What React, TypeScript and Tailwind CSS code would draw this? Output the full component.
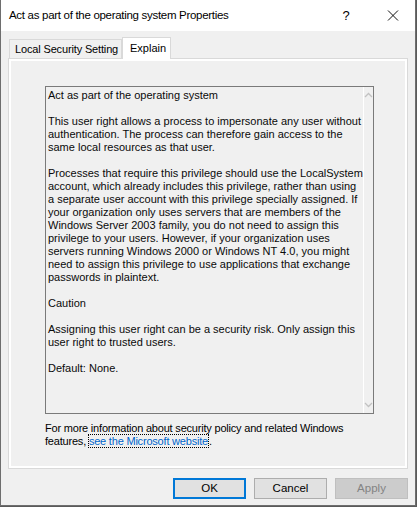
const EXPLAIN_LINES = [
  "Act as part of the operating system",
  "",
  "This user right allows a process to impersonate any user without",
  "authentication. The process can therefore gain access to the",
  "same local resources as that user.",
  "",
  "Processes that require this privilege should use the LocalSystem",
  "account, which already includes this privilege, rather than using",
  "a separate user account with this privilege specially assigned. If",
  "your organization only uses servers that are members of the",
  "Windows Server 2003 family, you do not need to assign this",
  "privilege to your users. However, if your organization uses",
  "servers running Windows 2000 or Windows NT 4.0, you might",
  "need to assign this privilege to use applications that exchange",
  "passwords in plaintext.",
  "",
  "Caution",
  "",
  "Assigning this user right can be a security risk. Only assign this",
  "user right to trusted users.",
  "",
  "Default: None.",
];

const ui = "font-['Segoe_UI','Liberation_Sans',Arial,sans-serif]";

export default function App() {
  return (
    <div className="w-[417px] h-[507px] bg-[#5a5a5a] overflow-hidden">
      <div className={`w-[416px] h-[506px] flex flex-col border-x border-b border-[#6e6e6e] bg-[#f0f0f0] text-black ${ui}`}>
        {/* title bar */}
        <div className="h-[31px] shrink-0 bg-white flex items-center pl-[8px] text-[11.5px] tracking-[-0.3px]">
          <span className="flex-1">Act as part of the operating system Properties</span>
          <span className="w-[46px] text-center text-[13px] mr-[1px]">?</span>
          <svg width="46" height="31" viewBox="0 0 46 31" className="mr-[-1px]">
            <path d="M18 10.5 L28 20.5 M28 10.5 L18 20.5" stroke="#111" strokeWidth="1" fill="none" />
          </svg>
        </div>

        <div className="flex-1 flex flex-col px-[7px]">
          {/* tabs */}
          <div className="mt-[6px] flex items-end h-[21px] pl-[1px] text-[11px] whitespace-nowrap">
            <div className="h-[19px] w-[113px] pl-[5px] flex items-center border border-b-0 border-[#d9d9d9] bg-[#f0f0f0] tracking-[-0.15px]">
              Local Security Setting
            </div>
            <div className="relative h-[22px] w-[49px] -mb-[1px] pl-[7px] flex items-center border border-b-0 border-[#d9d9d9] bg-white z-10">
              Explain
            </div>
          </div>

          {/* tab page */}
          <div className="h-[411px] border border-[#d9d9d9]">
            <div className="h-full border-2 border-white flex flex-col px-[34px] pt-[25px]">
              <div className="w-[329px] h-[328px] border border-[#7a7a7a] bg-[#f0f0f0] flex">
                <div className="flex-1 pl-[2px] pt-[2px] font-['Liberation_Sans',Arial,sans-serif] text-[11px] leading-[13px] text-[#0a0a0a]">
                  {EXPLAIN_LINES.map((line, i) => (
                    <div key={i} className="h-[13px] whitespace-pre">{line}</div>
                  ))}
                </div>
                <div className="w-[17px] border-l border-white flex flex-col items-center justify-between py-[5px]">
                  <svg width="9" height="6" viewBox="0 0 9 6">
                    <path d="M1 5 L4.5 1.5 L8 5" stroke="#c2c2c2" strokeWidth="1.3" fill="none" />
                  </svg>
                  <svg width="9" height="6" viewBox="0 0 9 6">
                    <path d="M1 1 L4.5 4.5 L8 1" stroke="#c2c2c2" strokeWidth="1.3" fill="none" />
                  </svg>
                </div>
              </div>

              <div className="mt-[8px] text-[11px] leading-[13px] whitespace-nowrap tracking-[-0.2px]">
                <div>For more information about security policy and related Windows</div>
                <div>
                  features,{" "}
                  <span className="text-[#0066cc] border border-dotted border-black -ml-[1px]">see the Microsoft website</span>.
                </div>
              </div>
            </div>
          </div>

          {/* buttons */}
          <div className="mt-[9px] flex justify-end gap-[8px] text-[11.5px]">
            <button className="w-[73px] h-[21px] bg-[#e1e1e1] border-2 border-[#0078d7] flex items-center justify-center">
              OK
            </button>
            <button className="w-[73px] h-[21px] bg-[#e1e1e1] border border-[#adadad] flex items-center justify-center">
              Cancel
            </button>
            <button className="w-[73px] h-[21px] bg-[#cccccc] border border-[#bfbfbf] text-[#838383] flex items-center justify-center">
              Apply
            </button>
          </div>
        </div>
      </div>
    </div>
  );
}
